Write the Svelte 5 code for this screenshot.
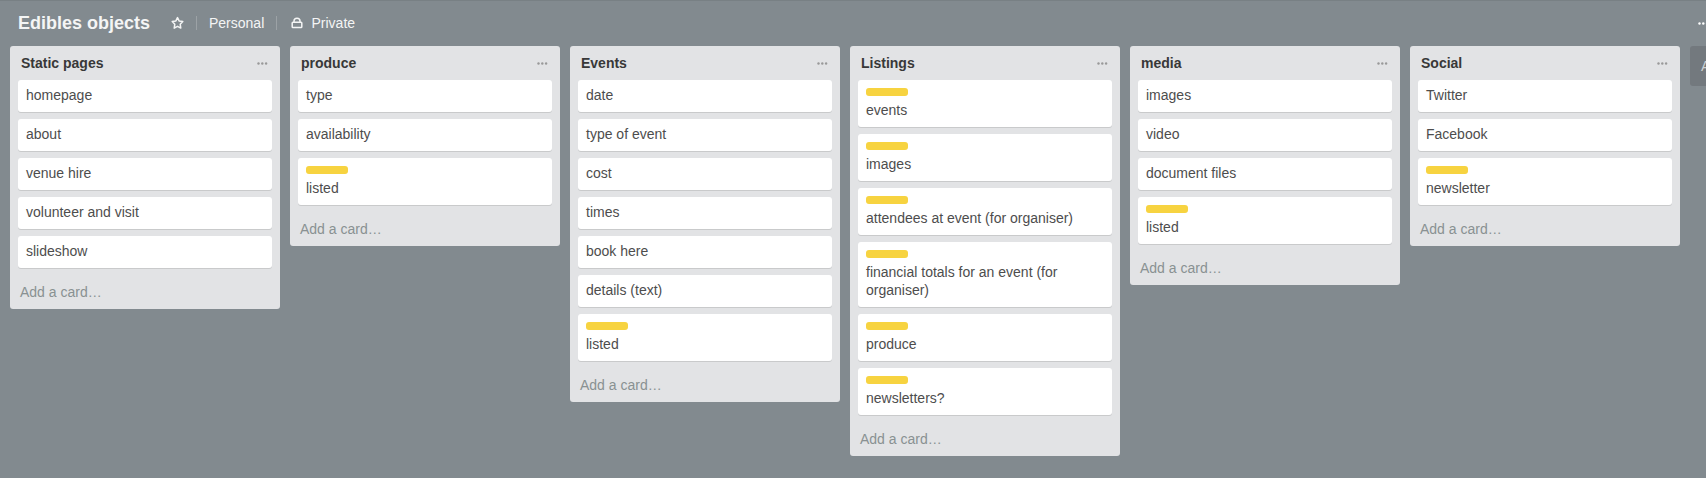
<script>
  const lists = [
    { name: 'Static pages', cards: ['homepage', 'about', 'venue hire', 'volunteer and visit', 'slideshow'] },
    { name: 'produce', cards: ['type', 'availability', { text: 'listed', label: true }] },
    { name: 'Events', cards: ['date', 'type of event', 'cost', 'times', 'book here', 'details (text)', { text: 'listed', label: true }] },
    {
      name: 'Listings',
      cards: [
        { text: 'events', label: true },
        { text: 'images', label: true },
        { text: 'attendees at event (for organiser)', label: true },
        { text: 'financial totals for an event (for organiser)', label: true },
        { text: 'produce', label: true },
        { text: 'newsletters?', label: true }
      ]
    },
    { name: 'media', cards: ['images', 'video', 'document files', { text: 'listed', label: true }] },
    { name: 'Social', cards: ['Twitter', 'Facebook', { text: 'newsletter', label: true }] }
  ].map((list) => ({
    ...list,
    cards: list.cards.map((card) => (typeof card === 'string' ? { text: card, label: false } : card))
  }));
</script>

{#snippet dots()}
  <svg class="dots" width="11" height="3" viewBox="0 0 11 3">
    <circle cx="1.5" cy="1.5" r="1.2" />
    <circle cx="5.3" cy="1.5" r="1.2" />
    <circle cx="9.1" cy="1.5" r="1.2" />
  </svg>
{/snippet}

<div class="board">
  <header>
    <h1>Edibles objects</h1>
    <svg class="star" width="14" height="14" viewBox="0 0 14 14">
      <path d="M7.5 1.6 9.1 4.9 12.8 5.5 10.2 8.2 10.8 12.1 7.5 10.3 4.2 12.1 4.8 8.2 2.2 5.5 5.9 4.9Z" />
    </svg>
    <span class="divider"></span>
    <span class="team">Personal</span>
    <span class="divider"></span>
    <svg class="lock" width="12" height="12" viewBox="0 0 12 12">
      <rect x="1.2" y="5.2" width="9.6" height="5.3" rx="0.8" />
      <path d="M3 5V4.1A3 2.9 0 0 1 9 4.1V5" />
    </svg>
    <span class="visibility">Private</span>
    <span class="menu">{@render dots()}</span>
  </header>

  <main>
    {#each lists as list}
      <section class="list">
        <div class="list-header">
          <h2>{list.name}</h2>
          {@render dots()}
        </div>
        <div class="cards">
          {#each list.cards as card}
            <article class="card">
              {#if card.label}<div class="label"></div>{/if}
              <p>{card.text}</p>
            </article>
          {/each}
        </div>
        <div class="add-card">Add a card…</div>
      </section>
    {/each}
    <div class="add-list">Add a list…</div>
  </main>
</div>

<style>
  :global(body) {
    margin: 0;
    background: #828a8f;
  }

  .board {
    box-sizing: border-box;
    width: 100vw;
    height: 478px;
    overflow: hidden;
    border-top: 1px solid #788084;
    background: #828a8f;
    color: #4d4d4d;
    font: 14px/18px "Liberation Sans", Arial, sans-serif;
  }

  header {
    display: flex;
    align-items: center;
    height: 45px;
    box-sizing: border-box;
    padding: 0 0 1px 18px;
    color: #f4f5f5;
    white-space: nowrap;
  }

  h1 {
    margin: 0;
    width: 152px;
    font-size: 18px;
    line-height: 22px;
    font-weight: 700;
  }

  .star,
  .lock {
    flex: none;
    fill: none;
    stroke: #f4f5f5;
    stroke-width: 1.5;
    stroke-linejoin: round;
  }

  .divider {
    width: 1px;
    height: 14px;
    margin-left: 12px;
    background: #9ca2a6;
  }

  .team {
    width: 67px;
    margin-left: 12px;
    margin-right: -12px;
  }

  .team + .divider {
    margin-left: 12px;
  }

  .lock {
    margin-left: 14px;
  }

  .visibility {
    margin-left: 8.5px;
  }

  .menu {
    display: flex;
    width: 8px;
    margin-left: auto;
    overflow: hidden;
  }

  .dots {
    flex: none;
    display: block;
    fill: #999;
  }

  .menu .dots {
    fill: #fff;
  }

  main {
    display: flex;
    align-items: flex-start;
    gap: 10px;
    padding-left: 10px;
  }

  .list {
    flex: none;
    box-sizing: border-box;
    width: 270px;
    padding: 8px;
    border-radius: 3px;
    background: #e2e3e5;
  }

  .list-header {
    display: flex;
    align-items: center;
    justify-content: space-between;
    height: 18px;
    padding: 0 4px 0 3px;
    margin-bottom: 8px;
  }

  h2 {
    margin: 0;
    color: #383838;
    font-size: 14px;
    line-height: 18px;
    font-weight: 700;
  }

  .cards {
    display: flex;
    flex-direction: column;
    gap: 6px;
  }

  .card {
    padding: 6px 8px 8px;
    border-radius: 3px;
    margin-bottom: 1px;
    background: #fff;
    box-shadow: 0 1px 0 #c9cacb;
  }

  .card p {
    margin: 0;
  }

  .label {
    width: 42px;
    height: 8px;
    margin: 2px 0 5px;
    border-radius: 3px;
    background: #f7d340;
  }

  .add-card {
    margin-top: 14px;
    padding-left: 2px;
    color: #899192;
  }

  .add-list {
    flex: none;
    box-sizing: border-box;
    width: 270px;
    height: 40px;
    padding: 11px;
    border-radius: 3px;
    background: #73797e;
    color: #cdd2d4;
  }
</style>
